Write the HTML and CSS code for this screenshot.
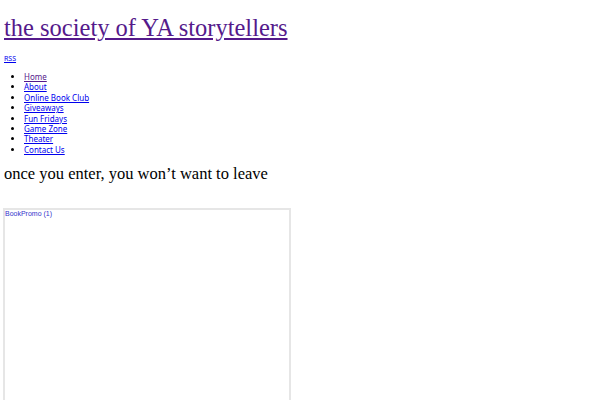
FILE: index.html
```html
<!DOCTYPE html>
<html>
<head>
<meta charset="utf-8">
<link rel="stylesheet" href="styles.css">
</head>
<body>
<header class="masthead">
  <h1 class="site-title"><a class="visited" href="#">the society of YA storytellers</a></h1>
  <a class="rss" href="#">RSS</a>
  <ul class="nav">
    <li><a class="visited" href="#">Home</a></li>
    <li><a href="#">About</a></li>
    <li><a href="#">Online Book Club</a></li>
    <li><a href="#">Giveaways</a></li>
    <li><a href="#">Fun Fridays</a></li>
    <li><a href="#">Game Zone</a></li>
    <li><a href="#">Theater</a></li>
    <li><a href="#">Contact Us</a></li>
  </ul>
  <p class="tagline">once you enter, you won’t want to leave</p>
</header>
<div class="promo">
  <a class="promo-link" href="#">BookPromo (1)</a>
</div>
</body>
</html>
```
FILE: styles.css
```css
html, body { background: #fff; }
body {
  margin: 0;
  padding: 0 4px;
  font-family: "Noto Sans", "Open Sans", sans-serif;
}
a { color: #0000ee; }
a.visited { color: #551a8b; }
.site-title {
  margin: 0;
  padding-top: 13px;
  font-family: "Liberation Serif", serif;
  font-weight: normal;
  font-size: 24.5px;
  line-height: 30px;
}
.rss {
  display: inline-block;
  margin-top: 11px;
  font-size: 7px;
  line-height: 10px;
}
.nav {
  margin: 6px 0 0;
  padding-left: 20px;
  font-size: 8px;
  line-height: 10.4px;
}
.tagline {
  margin: 8px 0 0;
  font-family: "Liberation Serif", serif;
  font-size: 16.5px;
  line-height: 22px;
}
.promo {
  margin-top: 23px;
  margin-left: -1px;
  width: 284px;
  height: 200px;
  border: 2px solid #e6e6e6;
}
.promo-link {
  display: block;
  font-family: "Liberation Sans", Arial, sans-serif;
  font-size: 7px;
  line-height: 8px;
  color: #3333cc;
  text-decoration: none;
}
```
